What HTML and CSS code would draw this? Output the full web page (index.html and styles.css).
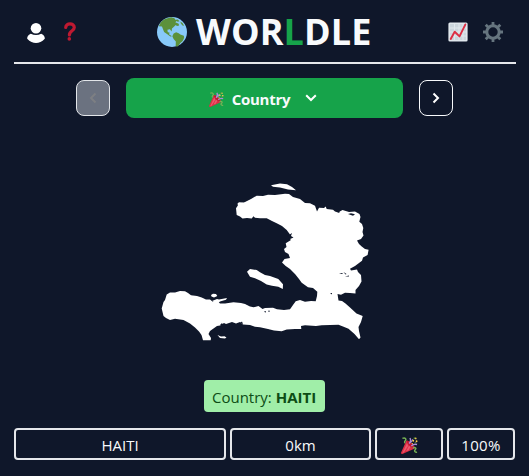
FILE: index.html
```html
<!DOCTYPE html>
<html lang="en">
<head>
<meta charset="utf-8">
<title>Worldle</title>
<link rel="stylesheet" href="styles.css">
</head>
<body>
<svg class="defs" width="0" height="0" aria-hidden="true">
  <symbol id="party" viewBox="0 0 36 36">
    <path fill="#DD2E44" d="M11.6 7.6c-.1.1-.2.3-.3.5L.2 33c-.4.8.1 1.9.8 2.3.6.7 1.5.9 2.1.6L28 24.800c4-1.700-2-8-7-12.500S12.400 6.500 11.600 7.600z"/>
    <path fill="#EA596E" d="M13 12 3 34l3-1 9-14zM17 18l-6 12 5-2 4-7z"/>
    <path fill="#BE1931" d="M13 8c4-1 14 9 14.500 15-5 2-18-11-14.500-15z"/>
    <path fill="none" stroke="#AA8DD8" stroke-width="3" d="M17 14c3-3 4-8 2-12M22 19c4-4 8-4 12-3"/>
    <path fill="none" stroke="#77B255" stroke-width="3" d="M3 3c6-3 9 2 6 5s0 5 0 5M25 23c6-2 8 1 5 4s1 6 4 5"/>
    <path fill="none" stroke="#AA8DD8" stroke-width="2.500" d="M20 12c2-1 3-5 5-7"/>
    <g fill="#FFCC4D"><circle cx="26" cy="8" r="2"/><circle cx="31" cy="3" r="2"/><circle cx="33" cy="9" r="2"/><circle cx="24" cy="14" r="1.500"/></g>
    <path fill="#5C913B" d="M27 1h3v3h-3zM29 11h3v2h-3z"/>
  </symbol>
</svg>
<div class="page">
  <header class="header">
    <div class="side">
      <svg class="icon-user" viewBox="0 0 18 20"><circle cx="9" cy="5.300" r="5.300"/><path d="M3.800 10.700Q9 13.500 14.200 10.700C17 11.700 18 14.200 17.800 15.800 15 19 12 20 9 20S3 19 .2 15.800C0 14.200 1 11.700 3.800 10.700Z"/></svg>
      <svg class="icon-help" viewBox="0 0 12 19"><path d="M1.700 5.400C1.700 .8 10.300.6 10.300 5.600 10.300 9 5.400 8.600 5.400 12.900"/><circle cx="5.300" cy="16.900" r="1.800"/></svg>
    </div>
    <h1 class="title">
      <svg class="globe" viewBox="0 0 36 36">
        <circle cx="18" cy="18" r="18" fill="#88C9F9"/>
        <path fill="#5C913B" d="M3.600 8C5 5 8 3 10.500 2L17 .4l4 1.100 1 1.800 3-.3 2 2.200-2 .5-1.500-1-1.500 1.500 4 2 .5 2-2.500.5-1.500-1-2.500 2.300-2 1.800-.5 3.500-2-2.500-3 .6.400 3 2.100.2-.4 2.500 3.400 2-2 .2-4-3-3.500-2.400L7 14l-1-2.700-3.800-.200zM28 5.500l2.600 1.700 2 3.300-2-.4-2-2.300z"/>
        <path fill="#5C913B" d="M20 19.800l3-1.400 3 1 2 1.600 4.200 1.500c1.200 2.500-.5 4.500-1.700 6.500l-2.500 2.200-1.800 2.800-2 1.600-1.800-.7.200-5.500-2.700-2.900-1.500-3.500z"/>
      </svg>
      <span class="word">WOR<span class="hit">L</span>DLE</span>
    </h1>
    <div class="side side-right">
      <svg class="icon-chart" viewBox="0 0 20 20"><rect x=".4" y=".4" width="19.200" height="19.200" rx="1.500" fill="#E1E8ED"/><rect x="2" y="2" width="16" height="16" fill="#CCD6DD"/><path d="M6.500 2v16M11 2v16M15 2v16M2 6h16M2 10h16M2 14h16" stroke="#E1E8ED"/><path d="M2.700 17 6.700 9.700 11.500 14.400 17.400 2.400" fill="none" stroke="#DD2E44" stroke-width="1.900" stroke-linecap="round" stroke-linejoin="round"/></svg>
      <svg class="icon-gear" viewBox="0 0 20 20"><circle cx="10" cy="10" r="6.200" fill="none" stroke="#66757F" stroke-width="3"/><path d="M10 0v4M10 16v4M0 10h4M16 10h4M2.700 2.700l3.100 3.100M14.200 14.200l3.100 3.100M17.300 2.700l-3.100 3.100M5.800 14.200l-3.100 3.100" stroke="#66757F" stroke-width="2.800"/></svg>
    </div>
  </header>
  <nav class="rounds">
    <button class="step step-off" aria-label="Previous"><svg viewBox="0 0 8 12"><path d="M6.500 1.500 2 6l4.500 4.500"/></svg></button>
    <button class="current">
      <svg class="party-small"><use href="#party"/></svg>
      <span class="round-name">Country</span>
      <svg class="caret" viewBox="0 0 12 8"><path d="M1.200 1.200 6 6l4.800-4.800"/></svg>
    </button>
    <button class="step" aria-label="Next"><svg viewBox="0 0 8 12"><path d="M1.500 1.500 6 6l-4.500 4.500"/></svg></button>
  </nav>
  <svg class="map" viewBox="155 175 220 175">
    <path d="M271 185.300 280 183.500 287 184.300 292 187 296 190.300 288 189.500 280 187.600 273 186.800Z"/>
    <path d="M236 208.300 238.500 204.500 245 202 251 199 256.700 195.700 263 196 268 194.700 275 195 285 193.700 289 194 293 197 300 199 305 203 310 203.300 315 205.700 317 211.500 319 207.700 324 208 325.700 206.500 326.700 209 333 209.700 335 211.500 338 212.500 342.500 210 349 212 355 211.500 359.500 214 360.500 217 359.300 221.700 362 224 363.300 228 362.500 232 363.500 235.500 361 239 357 240.500 359 244 361.700 246.500 365 249 368.600 249.700 367.600 255 363 257.500 362 260.700 359 263 355 266 350 268.700 351 270.500 357 269.500 358 272 361 275 361.500 281.500 359 286 355.500 290 355.500 293.600 350 293 345 292.700 341 294.700 337.500 294 338.500 300.500 342 301 345.500 303.500 350 307.500 356.500 313.500 362.700 316 361 322 358.500 327 359 331 360.500 337.500 359 339.300 354.500 334 348.500 328.700 343 326.500 338.500 324.700 330 325 321.700 325.300 316 326 305 325.300 301 326 301.300 329 295 329 286.700 329.500 281.700 331.300 274 330.500 268 329 260 327.300 255 326.700 250 325 243 324.500 240 322 236 323.500 232 322 226 324 224 323 220 325.500 217 326 210 331 208.500 334 211 338 210.700 340.300 203 340.300 201.500 335 199 331.500 195 327.500 190 323.500 183.500 320 175 318.700 170 320 166 318 163.500 316 161.700 308.500 163.500 302 165 300 166.700 294.500 170 292.500 175 292.500 180 291 185 291.300 188 293 191 295.300 197 296 201.700 297.500 206 299.500 210 299.600 213 302 217 300.500 220 303.500 225 303.500 233.500 302.300 241 303 245 304 250 306.500 253.500 307.300 258.500 306 262.500 309 265 308 273 307.700 277 309.300 284 310 290 309.300 293 305 295.700 301.300 300 300 305 301.700 311 301 315.700 301.300 317 296 317.300 291.700 313 288 308 287.300 301.700 282.700 299 279 295 274 290 269 285.700 266 282 262.500 284.500 259 290 258 288.500 254 285 252 284 249 286.500 247 285.700 243.300 291 240 289 238 290 234.500 286.700 230 282 226 276.700 223.300 272 221 266.700 218.300 260 218.300 255 217.700 253.500 216.300 251.700 218.500 247 218 242.500 218.500 240 216.500 236.700 215Z"/>
    <path d="M247 271.700 250 269 256.700 270 260 272.300 265 275 270 276 278.300 279 283 284.300 282.800 289 278.300 286.700 272 285.700 266.700 284.500 261 281 255 278.300 250 276.700Z"/>
    <path d="M211 295 213 293.700 216 294 217.300 296 214 297.500 211.500 296.500ZM212 301 217 299 219 299.500 227 298 226 299.700 220 301.500 217 304ZM217.500 335 221 336.500 224.500 336.300 226.500 337.500 225 338.500 220 338ZM237.500 203.500 239 202.300 243.500 202.500 243 204 238 206Z"/>
    <path class="lake" d="M339 274 342 273 343 274ZM343.500 272 346.500 274 345.500 274.500ZM345 276.500 349 275.500 349 276.500ZM330 293H332V294.500ZM348 214 351 213.300 355 214.300 353 215.700ZM337 211.500H340L339 213ZM287.500 236 292 233 291 236 293.500 237.500 289 239.500ZM264 311.500 266 311 265.500 312.700ZM268 310.800H270V311.600H268ZM220 325 222 323 223 325ZM240 323 242 321.500 243 324Z"/>
  </svg>
  <div class="answer">Country: <b>HAITI</b></div>
  <div class="guess">
    <div class="cell">HAITI</div>
    <div class="cell">0km</div>
    <div class="cell"><svg class="party-large"><use href="#party"/></svg></div>
    <div class="cell score">100%</div>
  </div>
</div>
</body>
</html>
```
FILE: styles.css
```css
* { box-sizing: border-box; }
body {
  margin: 0;
  height: 476px;
  overflow: hidden;
  background: #0f172a;
  color: #f8fafc;
  font: 16px/24px "Open Sans", "Noto Sans", sans-serif;
}
svg { display: block; flex: none; }
.defs { position: absolute; }
.page { display: flex; flex-direction: column; align-items: center; padding: 0 14px; }
.header {
  width: 502px;
  height: 64px;
  margin-right: -1px;
  display: grid;
  grid-template-columns: 1fr auto 1fr;
  border-bottom: 2px solid #e5e7eb;
}
.side { display: flex; align-items: center; gap: 19px; padding-left: 13px; }
.side-right { justify-content: flex-end; gap: 15px; padding: 0 13px 0 0; }
.icon-user { width: 18px; height: 20px; margin-top: 2px; fill: #fff; }
.icon-help { width: 12px; height: 19px; }
.icon-help path { fill: none; stroke: #be1931; stroke-width: 3.2; stroke-linecap: round; }
.icon-help circle { fill: #be1931; }
.icon-chart, .icon-gear { width: 20px; height: 20px; }
.title { display: flex; align-items: center; gap: 9px; margin: 0 2px 0 0; font-size: 36px; line-height: 62px; font-weight: 700; }
.globe { width: 30px; height: 30px; }
.word { width: 175px; white-space: nowrap; letter-spacing: 0.1px; padding-top: 1px; }
.hit { color: #16a34a; }
.rounds { display: flex; align-items: center; gap: 16px; margin-top: 14px; }
button { padding: 0; border: 0; color: inherit; font: inherit; }
.step { width: 34px; height: 36px; display: flex; align-items: center; justify-content: center; border: 1px solid #f8fafc; border-radius: 8px; background: transparent; }
.step-off { background: #6b7280; border-color: #e2e5e9; }
.step svg { width: 8px; height: 12px; }
.step path, .caret path { fill: none; stroke: #fff; stroke-width: 2; }
.step-off path { stroke: #7d7f83; }
.current { width: 277px; height: 40px; display: flex; align-items: center; justify-content: center; padding-right: 4px; border-radius: 8px; background: #16a34a; }
.round-name { width: 59px; margin: 2px 14px 0 8px; font-size: 15px; letter-spacing: -0.25px; font-weight: 700; white-space: nowrap; }
.party-small { width: 15px; height: 15px; margin-top: 2px; }
.caret { width: 12px; height: 8px; }
.map { width: 220px; height: 175px; margin-top: 57px; margin-right: -1px; fill: #fff; }
.map .lake { fill: #0f172a; }
.answer { width: 121px; height: 32px; margin-top: 30px; padding: 5px 0 0 8px; border-radius: 4px; background: #a0eea8; color: #0d4d15; font-size: 15px; white-space: nowrap; }
.guess { width: 501px; display: grid; grid-template-columns: 212px 141px 68px 68px; gap: 4px; margin-top: 16px; }
.cell { height: 32px; display: flex; align-items: center; justify-content: center; border: 2px solid #e5e7eb; border-radius: 4px; font-size: 15px; padding-top: 2px; }
.score { letter-spacing: 0.3px; }
.party-large { width: 17px; height: 17px; }
```
